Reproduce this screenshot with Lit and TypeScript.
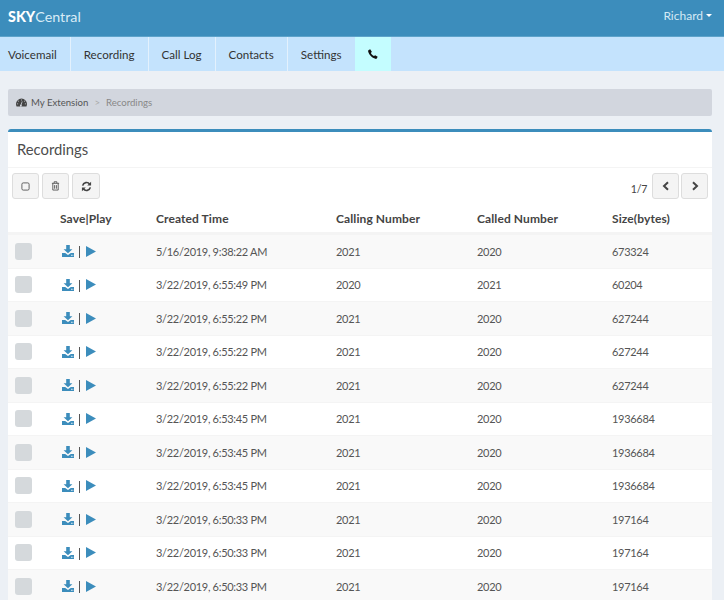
import { LitElement, html, css, svg } from "lit";
import { customElement } from "lit/decorators.js";

const rows = [
  ["5/16/2019, 9:38:22 AM", "2021", "2020", "673324"],
  ["3/22/2019, 6:55:49 PM", "2020", "2021", "60204"],
  ["3/22/2019, 6:55:22 PM", "2021", "2020", "627244"],
  ["3/22/2019, 6:55:22 PM", "2021", "2020", "627244"],
  ["3/22/2019, 6:55:22 PM", "2021", "2020", "627244"],
  ["3/22/2019, 6:53:45 PM", "2021", "2020", "1936684"],
  ["3/22/2019, 6:53:45 PM", "2021", "2020", "1936684"],
  ["3/22/2019, 6:53:45 PM", "2021", "2020", "1936684"],
  ["3/22/2019, 6:50:33 PM", "2021", "2020", "197164"],
  ["3/22/2019, 6:50:33 PM", "2021", "2020", "197164"],
  ["3/22/2019, 6:50:33 PM", "2021", "2020", "197164"],
];
const tabs = ["Voicemail", "Recording", "Call Log", "Contacts", "Settings"];

const download = svg`<svg viewBox="0 0 12 12" width="12" height="12"><path fill="#3c8dbc" d="M4.200 0h3.600v4.200h2.600L6 8.200 1.600 4.200h2.600zM0 8h3.200L6 10l2.800-2H12v4H0z"/><rect x="9" y="9.800" width=".9" height=".9" fill="#fff"/><rect x="10.400" y="9.800" width=".9" height=".9" fill="#fff"/></svg>`;
const play = svg`<svg viewBox="0 0 10 11" width="10" height="11"><path fill="#3c8dbc" d="M0 0 10 5.500 0 11z"/></svg>`;

@customElement("app-root")
export class AppRoot extends LitElement {
  static styles = css`
    :host { display: block; height: 600px; overflow: hidden; background: #ecf0f5; font-family: "Lato", "Liberation Sans", sans-serif; font-size: 12px; color: #444; }
    .top { height: 37px; box-sizing: border-box; background: #3c8dbc; border-bottom: 1px solid #5da3ca; display: flex; justify-content: space-between; align-items: center; padding: 0 12px 4px 8px; }
    .brand { font-size: 14.3px; color: #d9ecf7; }
    .brand b { color: #fff; font-weight: 900; }
    .user { font-size: 12px; color: #d5e9f5; display: flex; align-items: center; gap: 3px; padding-bottom: 2px; }
    .caret { width: 0; height: 0; border: 3.5px solid transparent; border-top-color: #fff; border-bottom: 0; }
    .nav { height: 34px; background: #c4e3fd; display: flex; }
    .tab { display: flex; align-items: center; padding: 0 13px; color: #333; font-size: 11.6px; border-right: 1px solid #e3f1fd; }
    .tab:first-child { padding-left: 8px; }
    .tab:nth-child(5) { padding-right: 13px; border-right: 0; margin-right: 1px; }
    .tab.call { background: #c4fdff; border: 0; width: 36px; box-sizing: border-box; justify-content: center; padding: 0; }
    .main { padding: 18px 12px 0 8px; display: flex; flex-direction: column; gap: 13px; }
    .crumb { height: 27px; background: #d2d6de; border-radius: 2px; display: flex; align-items: center; gap: 4px; padding-left: 8px; font-size: 9.6px; color: #555; }
    .crumb .sep { color: #aaa; margin: 0 2px; }
    .crumb .cur { color: #888; }
    .card { background: #fff; border-top: 3px solid #3c8dbc; border-radius: 3px 3px 0 0; }
    .title { height: 36px; box-sizing: border-box; border-bottom: 1px solid #f4f4f4; display: flex; align-items: center; padding: 0 0 2px 9px; font-size: 14.8px; color: #4d4d4d; }
    .bar { display: flex; justify-content: space-between; padding: 5px 4px 0 4px; height: 29px; }
    .btns { display: flex; gap: 3px; }
    .btn { height: 26px; background: #f4f4f4; border: 1px solid #ddd; border-radius: 3px; display: flex; align-items: center; justify-content: center; box-sizing: border-box; }
    .w1 { width: 27px; }
    .w2 { width: 28px; }
    .pager { display: flex; gap: 2px; align-items: flex-start; }
    .count { font-size: 10.6px; letter-spacing: -.3px; margin: 10px 3px 0 0; }
    .r { display: grid; grid-template-columns: 52px 96px 180px 141px 135px 1fr; align-items: center; }
    .r.head { height: 32px; box-sizing: border-box; padding-top: 2px; border-bottom: 2px solid #f4f4f4; font-weight: 700; font-size: 12px; color: #444; letter-spacing: .1px; }
    .r.row { height: 33.5px; box-sizing: border-box; border-top: 1px solid #f4f4f4; font-size: 11px; letter-spacing: -.3px; color: #555; }
    .r.row:nth-child(odd) { background: #f9f9f9; }
    .cb { width: 17px; height: 17px; margin-left: 7px; background: #d5d9dc; border-radius: 3px; }
    .act { display: flex; align-items: center; gap: 4px; padding-left: 2px; color: #444; }
    .act svg:first-child { margin-right: 1px; }
    .pipe { width: 1px; height: 12px; background: #555; margin: 2px 2px 0 0; }
  `;

  render() {
    return html`
      <div class="top">
        <div class="brand"><b>SKY</b>Central</div>
        <div class="user">Richard<span class="caret"></span></div>
      </div>
      <div class="nav">
        ${tabs.map((t) => html`<div class="tab">${t}</div>`)}
        <div class="tab call">
          <svg viewBox="0 0 12 12" width="10" height="10"><path fill="#111" d="M2.6.4 4.6 3.4 3.5 4.8c.6 1.500 2.100 3 3.700 3.700l1.400-1.100 3 2-.9 1.700c-.3.500-1 .9-1.800.7C4.800 10.800 1.200 7.200.2 3.100 0 2.300.4 1.600.9 1.300z"/></svg>
        </div>
      </div>
      <div class="main">
        <div class="crumb">
          <svg viewBox="0 0 14 10" width="11" height="9"><path fill="#444" fill-rule="evenodd" d="M7 0a7 7 0 0 0-7 7c0 1 .3 2 .7 3h12.600c.4-1 .7-2 .7-3a7 7 0 0 0-7-7zM6.500 1.200h1v1.300h-1zM2.800 2.500l1 1-.7.700-1-1zM11.200 2.500l-1 1 .7.700 1-1zM1.300 6.200h1.400v1H1.300zM11.300 6.200h1.400v1h-1.400zM6 7.500l1.600-4 .8.300-1.400 4a1.200 1.200 0 1 1-1-.3z"/></svg>
          <span>My Extension</span><span class="sep">&gt;</span><span class="cur">Recordings</span>
        </div>
        <div class="card">
          <div class="title">Recordings</div>
          <div class="bar">
            <div class="btns">
              <div class="btn w1"><svg viewBox="0 0 10 10" width="9" height="9"><rect x="1" y="1" width="8" height="8" rx="1.500" fill="none" stroke="#555" stroke-width="1"/></svg></div>
              <div class="btn w1"><svg viewBox="0 0 10 11" width="9" height="10"><path fill="none" stroke="#555" d="M1 2.500h8M2 2.500v7.500h6V2.500M3.500 2.500V.8h3v1.700M4 4.500v4M6 4.500v4"/></svg></div>
              <div class="btn w2"><svg viewBox="0 0 12 12" width="11" height="11"><path fill="none" stroke="#444" stroke-width="1.800" d="M1.800 5A4.300 4.300 0 0 1 9.500 3.500M10.200 7A4.300 4.300 0 0 1 2.500 8.500"/><path fill="#444" d="M11 .8V5H6.800zM1 11.200V7h4.200z"/></svg></div>
            </div>
            <div class="pager">
              <span class="count">1/7</span>
              <div class="btn w1"><svg viewBox="0 0 8 10" width="8" height="10"><path fill="none" stroke="#444" stroke-width="2" d="M6 1.200 2 5l4 3.800"/></svg></div>
              <div class="btn w1"><svg viewBox="0 0 8 10" width="8" height="10"><path fill="none" stroke="#444" stroke-width="2" d="M2 1.200 6 5 2 8.800"/></svg></div>
            </div>
          </div>
          <div class="r head"><span></span><span>Save|Play</span><span>Created Time</span><span>Calling Number</span><span>Called Number</span><span>Size(bytes)</span></div>
          <div class="body">
            ${rows.map((r) => html`
              <div class="r row">
                <div class="cb"></div>
                <div class="act">${download}<span class="pipe"></span>${play}</div>
                <span>${r[0]}</span><span>${r[1]}</span><span>${r[2]}</span><span>${r[3]}</span>
              </div>`)}
          </div>
        </div>
      </div>
    `;
  }
}
